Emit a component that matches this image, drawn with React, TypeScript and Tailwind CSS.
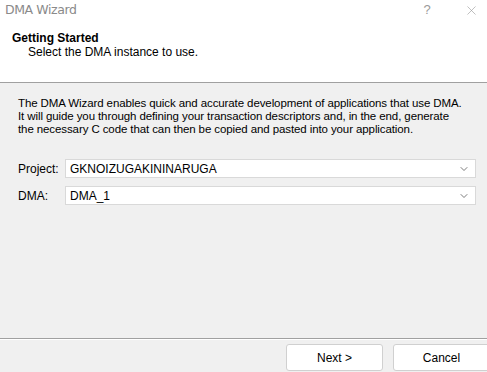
import { ChevronDown, X } from 'lucide-react';

function Combo({ value }: { value: string }) {
  return (
    <div className="flex-1 h-[19px] bg-white border border-[#d9d9d9] flex items-center justify-between pl-[4px] pr-[5px]">
      <span className="text-[12px] text-black leading-none">{value}</span>
      <ChevronDown className="w-[12px] h-[12px] text-[#444]" strokeWidth={1.4} />
    </div>
  );
}

export default function App() {
  return (
    <div className="w-[487px] h-[372px] bg-[#f0f0f0] flex flex-col overflow-hidden font-['Liberation_Sans',_Arial,_sans-serif] text-black">
      {/* title bar */}
      <div className="h-[20px] bg-white flex items-center justify-between pl-[5px]">
        <span className="text-[12.5px] text-[#8a8a8a] font-['DejaVu_Sans',_sans-serif] tracking-[-0.4px]">DMA Wizard</span>
        <div className="flex items-center">
          <span className="text-[13px] text-[#9a9a9a] w-[14px] text-center mr-[30px]">?</span>
          <X className="w-[15px] h-[15px] text-[#9a9a9a] mr-[8px]" strokeWidth={1} />
        </div>
      </div>

      {/* header */}
      <div className="h-[63px] bg-white border-b border-[#a0a0a0] pl-[12px] pt-[11px]">
        <div className="text-[12px] font-bold leading-[14px]">Getting Started</div>
        <div className="text-[12px] leading-[14px] pl-[16px]">Select the DMA instance to use.</div>
      </div>

      {/* body */}
      <div className="flex-1 pl-[18px] pr-[11px] pt-[14px]">
        <p className="text-[11.5px] leading-[13px] tracking-[-0.1px] whitespace-nowrap">
          The DMA Wizard enables quick and accurate development of applications that use DMA.
          <br />
          It will guide you through defining your transaction descriptors and, in the end, generate
          <br />
          the necessary C code that can then be copied and pasted into your application.
        </p>

        <div className="mt-[23px] flex flex-col gap-[8px]">
          <div className="flex items-center">
            <span className="w-[47px] text-[12px]">Project:</span>
            <Combo value="GKNOIZUGAKININARUGA" />
          </div>
          <div className="flex items-center">
            <span className="w-[47px] text-[12px]">DMA:</span>
            <Combo value="DMA_1" />
          </div>
        </div>
      </div>

      {/* footer */}
      <div className="h-[34px] border-t border-[#a0a0a0] shadow-[inset_0_1px_0_#ffffff] flex justify-end gap-[10px] pt-[5px]">
        <button className="w-[97px] h-[27px] bg-white border border-[#d0d0d0] rounded-[3px] text-[12px]">Next &gt;</button>
        <button className="w-[97px] h-[27px] bg-white border border-[#d0d0d0] rounded-[3px] text-[12px] -mr-[3px]">Cancel</button>
      </div>
    </div>
  );
}
